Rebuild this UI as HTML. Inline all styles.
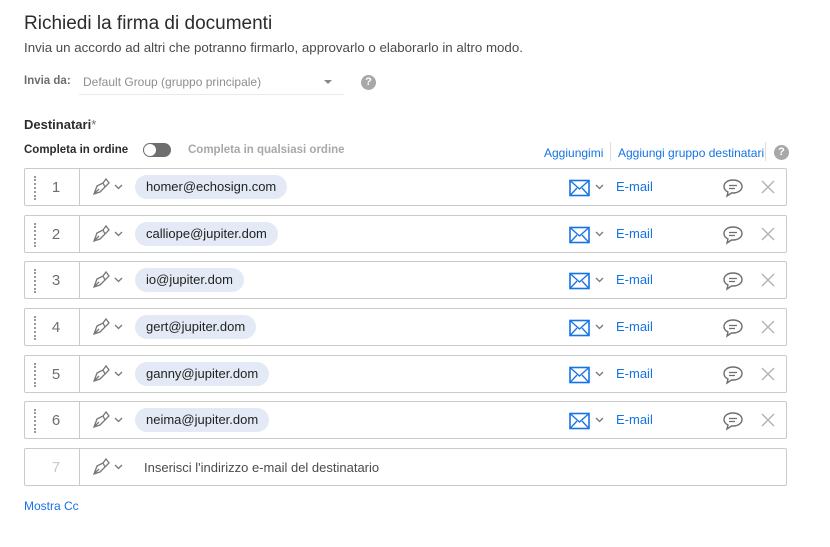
<!DOCTYPE html>
<html><head><meta charset="utf-8"><style>
*{margin:0;padding:0;box-sizing:border-box}
body{width:830px;height:547px;background:#fff;font-family:"Liberation Sans",sans-serif;color:#2c2c2c;position:relative;overflow:hidden}
.a{position:absolute;white-space:nowrap}
.row{position:absolute;left:24px;width:763px;height:38px;border:1px solid #cacaca;border-radius:2px;background:#fff}
.row .drag{position:absolute;left:9px;top:7px;height:24px;border-left:2px dotted #999}
.row .num{position:absolute;left:14px;width:34px;top:10px;text-align:center;font-size:15px;color:#6e6e6e}
.row .div{position:absolute;left:54px;top:0;bottom:0;border-left:1px solid #cacaca}
.row .pen{position:absolute;left:66px;top:8px}
.row .pill{position:absolute;left:110px;top:6px;height:24px;border-radius:12px;background:#e3eaf5;padding:0 11px;font-size:13px;line-height:24px;color:#222}
.row .mail{position:absolute;left:544px;top:10px}
.row .em{position:absolute;left:591px;top:10px;font-size:13px;color:#1473e6}
.row .bub{position:absolute;left:697px;top:9px}
.row .x{position:absolute;left:735px;top:10px}
.blue{color:#1473e6}
</style></head><body>
<div class="a" style="left:24px;top:13px;font-size:19px;color:#2c2c2c">Richiedi la firma di documenti</div>
<div class="a" style="left:24px;top:40px;font-size:13.3px;color:#4b4b4b">Invia un accordo ad altri che potranno firmarlo, approvarlo o elaborarlo in altro modo.</div>
<div class="a" style="left:24px;top:75px;font-size:11.5px;font-weight:bold;color:#6e6e6e">Invia da:</div>
<div class="a" style="left:83px;top:75px;font-size:12px;color:#8e8e8e">Default Group (gruppo principale)</div>
<div class="a" style="left:79px;top:94px;width:265px;border-top:1px solid #eaeaea"></div>
<div class="a" style="left:324px;top:80px;width:0;height:0;border-left:4px solid transparent;border-right:4px solid transparent;border-top:4px solid #888"></div>
<div class="a" style="left:361px;top:75px;width:15px;height:15px;border-radius:50%;background:#a8a8a8;color:#fff;font-size:11px;font-weight:bold;text-align:center;line-height:15px">?</div>
<div class="a" style="left:24px;top:117px;font-size:13px;font-weight:bold;color:#2c2c2c">Destinatari<span style="font-weight:normal;color:#6e6e6e">*</span></div>
<div class="a" style="left:24px;top:144px;font-size:11.5px;font-weight:bold;color:#2c2c2c">Completa in ordine</div>
<div class="a" style="left:143px;top:143px;width:28px;height:14px;border-radius:7px;background:#6e6e6e"><div style="position:absolute;left:1px;top:1px;width:12px;height:12px;border-radius:50%;background:#fff"></div></div>
<div class="a" style="left:188px;top:144px;font-size:11.5px;font-weight:bold;color:#a8a8a8">Completa in qualsiasi ordine</div>
<div class="a blue" style="left:544px;top:146px;font-size:12px">Aggiungimi</div>
<div class="a" style="left:610px;top:142px;height:19px;border-left:1px solid #ddd"></div>
<div class="a blue" style="left:618px;top:146px;font-size:12px">Aggiungi gruppo destinatari</div>
<div class="a" style="left:765px;top:142px;height:19px;border-left:1px solid #ddd"></div>
<div class="a" style="left:774px;top:145px;width:15px;height:15px;border-radius:50%;background:#a8a8a8;color:#fff;font-size:11px;font-weight:bold;text-align:center;line-height:15px">?</div>

<div class="row" style="top:168px"><div class="drag"></div><div class="num">1</div><div class="div"></div>
<svg class="pen" width="34" height="20" viewBox="0 0 34 20"><path d="M3 17 L6 9 L12 6 L14 10 L9 15 Z M3 17 L8 12 M12 6 L15 2 L18 6 L14 10" fill="none" stroke="#777" stroke-width="1.3"/><path d="M24 8 L27.5 11.5 L31 8" fill="none" stroke="#777" stroke-width="1.3"/></svg>
<div class="pill">homer@echosign.com</div>
<svg class="mail" width="40" height="18" viewBox="0 0 40 18"><rect x="1" y="1.5" width="19" height="15" fill="none" stroke="#1473e6" stroke-width="1.6"/><path d="M1 1.5 L10.5 10 L20 1.5 M1 16.5 L8 9 M20 16.5 L13 9" fill="none" stroke="#1473e6" stroke-width="1.3"/><path d="M27 6 L30.5 9.5 L34 6" fill="none" stroke="#777" stroke-width="1.3"/></svg>
<div class="em">E-mail</div>
<svg class="bub" width="22" height="20" viewBox="0 0 22 20"><path d="M11 2 C5.5 2 2 5 2 8.5 C2 11 4 13 6 14 L5 18 L9.5 15 C10 15 10.5 15 11 15 C16.5 15 20 12 20 8.5 C20 5 16.5 2 11 2 Z" fill="none" stroke="#6e6e6e" stroke-width="1.4"/><path d="M7 7.5 H15 M7 10.5 H13" stroke="#6e6e6e" stroke-width="1.3"/></svg>
<svg class="x" width="16" height="16" viewBox="0 0 16 16"><path d="M2 2 L14 14 M14 2 L2 14" stroke="#b3b3b3" stroke-width="1.4"/></svg></div>

<div class="row" style="top:215px"><div class="drag"></div><div class="num">2</div><div class="div"></div>
<svg class="pen" width="34" height="20" viewBox="0 0 34 20"><path d="M3 17 L6 9 L12 6 L14 10 L9 15 Z M3 17 L8 12 M12 6 L15 2 L18 6 L14 10" fill="none" stroke="#777" stroke-width="1.3"/><path d="M24 8 L27.5 11.5 L31 8" fill="none" stroke="#777" stroke-width="1.3"/></svg>
<div class="pill">calliope@jupiter.dom</div>
<svg class="mail" width="40" height="18" viewBox="0 0 40 18"><rect x="1" y="1.5" width="19" height="15" fill="none" stroke="#1473e6" stroke-width="1.6"/><path d="M1 1.5 L10.5 10 L20 1.5 M1 16.5 L8 9 M20 16.5 L13 9" fill="none" stroke="#1473e6" stroke-width="1.3"/><path d="M27 6 L30.5 9.5 L34 6" fill="none" stroke="#777" stroke-width="1.3"/></svg>
<div class="em">E-mail</div>
<svg class="bub" width="22" height="20" viewBox="0 0 22 20"><path d="M11 2 C5.5 2 2 5 2 8.5 C2 11 4 13 6 14 L5 18 L9.5 15 C10 15 10.5 15 11 15 C16.5 15 20 12 20 8.5 C20 5 16.5 2 11 2 Z" fill="none" stroke="#6e6e6e" stroke-width="1.4"/><path d="M7 7.5 H15 M7 10.5 H13" stroke="#6e6e6e" stroke-width="1.3"/></svg>
<svg class="x" width="16" height="16" viewBox="0 0 16 16"><path d="M2 2 L14 14 M14 2 L2 14" stroke="#b3b3b3" stroke-width="1.4"/></svg></div>

<div class="row" style="top:261px"><div class="drag"></div><div class="num">3</div><div class="div"></div>
<svg class="pen" width="34" height="20" viewBox="0 0 34 20"><path d="M3 17 L6 9 L12 6 L14 10 L9 15 Z M3 17 L8 12 M12 6 L15 2 L18 6 L14 10" fill="none" stroke="#777" stroke-width="1.3"/><path d="M24 8 L27.5 11.5 L31 8" fill="none" stroke="#777" stroke-width="1.3"/></svg>
<div class="pill">io@jupiter.dom</div>
<svg class="mail" width="40" height="18" viewBox="0 0 40 18"><rect x="1" y="1.5" width="19" height="15" fill="none" stroke="#1473e6" stroke-width="1.6"/><path d="M1 1.5 L10.5 10 L20 1.5 M1 16.5 L8 9 M20 16.5 L13 9" fill="none" stroke="#1473e6" stroke-width="1.3"/><path d="M27 6 L30.5 9.5 L34 6" fill="none" stroke="#777" stroke-width="1.3"/></svg>
<div class="em">E-mail</div>
<svg class="bub" width="22" height="20" viewBox="0 0 22 20"><path d="M11 2 C5.5 2 2 5 2 8.5 C2 11 4 13 6 14 L5 18 L9.5 15 C10 15 10.5 15 11 15 C16.5 15 20 12 20 8.5 C20 5 16.5 2 11 2 Z" fill="none" stroke="#6e6e6e" stroke-width="1.4"/><path d="M7 7.5 H15 M7 10.5 H13" stroke="#6e6e6e" stroke-width="1.3"/></svg>
<svg class="x" width="16" height="16" viewBox="0 0 16 16"><path d="M2 2 L14 14 M14 2 L2 14" stroke="#b3b3b3" stroke-width="1.4"/></svg></div>

<div class="row" style="top:308px"><div class="drag"></div><div class="num">4</div><div class="div"></div>
<svg class="pen" width="34" height="20" viewBox="0 0 34 20"><path d="M3 17 L6 9 L12 6 L14 10 L9 15 Z M3 17 L8 12 M12 6 L15 2 L18 6 L14 10" fill="none" stroke="#777" stroke-width="1.3"/><path d="M24 8 L27.5 11.5 L31 8" fill="none" stroke="#777" stroke-width="1.3"/></svg>
<div class="pill">gert@jupiter.dom</div>
<svg class="mail" width="40" height="18" viewBox="0 0 40 18"><rect x="1" y="1.5" width="19" height="15" fill="none" stroke="#1473e6" stroke-width="1.6"/><path d="M1 1.5 L10.5 10 L20 1.5 M1 16.5 L8 9 M20 16.5 L13 9" fill="none" stroke="#1473e6" stroke-width="1.3"/><path d="M27 6 L30.5 9.5 L34 6" fill="none" stroke="#777" stroke-width="1.3"/></svg>
<div class="em">E-mail</div>
<svg class="bub" width="22" height="20" viewBox="0 0 22 20"><path d="M11 2 C5.5 2 2 5 2 8.5 C2 11 4 13 6 14 L5 18 L9.5 15 C10 15 10.5 15 11 15 C16.5 15 20 12 20 8.5 C20 5 16.5 2 11 2 Z" fill="none" stroke="#6e6e6e" stroke-width="1.4"/><path d="M7 7.5 H15 M7 10.5 H13" stroke="#6e6e6e" stroke-width="1.3"/></svg>
<svg class="x" width="16" height="16" viewBox="0 0 16 16"><path d="M2 2 L14 14 M14 2 L2 14" stroke="#b3b3b3" stroke-width="1.4"/></svg></div>

<div class="row" style="top:355px"><div class="drag"></div><div class="num">5</div><div class="div"></div>
<svg class="pen" width="34" height="20" viewBox="0 0 34 20"><path d="M3 17 L6 9 L12 6 L14 10 L9 15 Z M3 17 L8 12 M12 6 L15 2 L18 6 L14 10" fill="none" stroke="#777" stroke-width="1.3"/><path d="M24 8 L27.5 11.5 L31 8" fill="none" stroke="#777" stroke-width="1.3"/></svg>
<div class="pill">ganny@jupiter.dom</div>
<svg class="mail" width="40" height="18" viewBox="0 0 40 18"><rect x="1" y="1.5" width="19" height="15" fill="none" stroke="#1473e6" stroke-width="1.6"/><path d="M1 1.5 L10.5 10 L20 1.5 M1 16.5 L8 9 M20 16.5 L13 9" fill="none" stroke="#1473e6" stroke-width="1.3"/><path d="M27 6 L30.5 9.5 L34 6" fill="none" stroke="#777" stroke-width="1.3"/></svg>
<div class="em">E-mail</div>
<svg class="bub" width="22" height="20" viewBox="0 0 22 20"><path d="M11 2 C5.5 2 2 5 2 8.5 C2 11 4 13 6 14 L5 18 L9.5 15 C10 15 10.5 15 11 15 C16.5 15 20 12 20 8.5 C20 5 16.5 2 11 2 Z" fill="none" stroke="#6e6e6e" stroke-width="1.4"/><path d="M7 7.5 H15 M7 10.5 H13" stroke="#6e6e6e" stroke-width="1.3"/></svg>
<svg class="x" width="16" height="16" viewBox="0 0 16 16"><path d="M2 2 L14 14 M14 2 L2 14" stroke="#b3b3b3" stroke-width="1.4"/></svg></div>

<div class="row" style="top:401px"><div class="drag"></div><div class="num">6</div><div class="div"></div>
<svg class="pen" width="34" height="20" viewBox="0 0 34 20"><path d="M3 17 L6 9 L12 6 L14 10 L9 15 Z M3 17 L8 12 M12 6 L15 2 L18 6 L14 10" fill="none" stroke="#777" stroke-width="1.3"/><path d="M24 8 L27.5 11.5 L31 8" fill="none" stroke="#777" stroke-width="1.3"/></svg>
<div class="pill">neima@jupiter.dom</div>
<svg class="mail" width="40" height="18" viewBox="0 0 40 18"><rect x="1" y="1.5" width="19" height="15" fill="none" stroke="#1473e6" stroke-width="1.6"/><path d="M1 1.5 L10.5 10 L20 1.5 M1 16.5 L8 9 M20 16.5 L13 9" fill="none" stroke="#1473e6" stroke-width="1.3"/><path d="M27 6 L30.5 9.5 L34 6" fill="none" stroke="#777" stroke-width="1.3"/></svg>
<div class="em">E-mail</div>
<svg class="bub" width="22" height="20" viewBox="0 0 22 20"><path d="M11 2 C5.5 2 2 5 2 8.5 C2 11 4 13 6 14 L5 18 L9.5 15 C10 15 10.5 15 11 15 C16.5 15 20 12 20 8.5 C20 5 16.5 2 11 2 Z" fill="none" stroke="#6e6e6e" stroke-width="1.4"/><path d="M7 7.5 H15 M7 10.5 H13" stroke="#6e6e6e" stroke-width="1.3"/></svg>
<svg class="x" width="16" height="16" viewBox="0 0 16 16"><path d="M2 2 L14 14 M14 2 L2 14" stroke="#b3b3b3" stroke-width="1.4"/></svg></div>

<div class="row" style="top:448px"><div class="num" style="color:#c8c8c8">7</div><div class="div"></div>
<svg class="pen" width="34" height="20" viewBox="0 0 34 20"><path d="M3 17 L6 9 L12 6 L14 10 L9 15 Z M3 17 L8 12 M12 6 L15 2 L18 6 L14 10" fill="none" stroke="#777" stroke-width="1.3"/><path d="M24 8 L27.5 11.5 L31 8" fill="none" stroke="#777" stroke-width="1.3"/></svg>
<div class="a" style="left:119px;top:11px;font-size:13px;color:#4b4b4b">Inserisci l'indirizzo e-mail del destinatario</div></div>

<div class="a blue" style="left:24px;top:499px;font-size:12px">Mostra Cc</div>
</body></html>
